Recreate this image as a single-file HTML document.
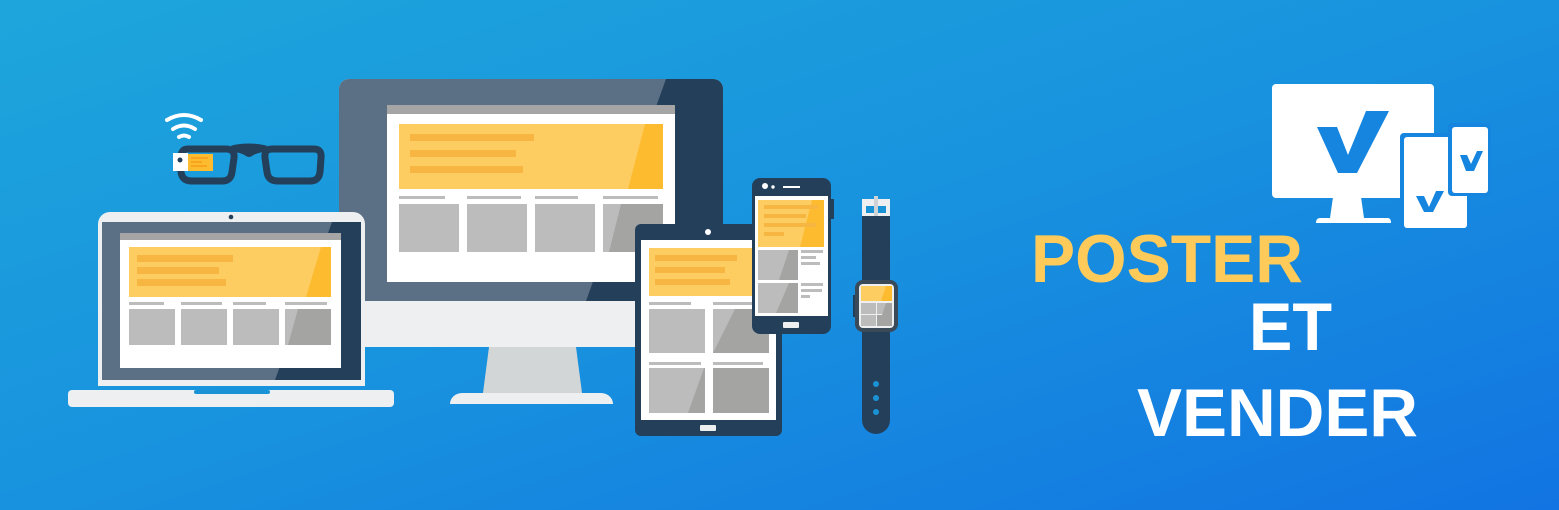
<!DOCTYPE html>
<html><head><meta charset="utf-8"><style>
html,body{margin:0;padding:0;width:1559px;height:510px;overflow:hidden}
svg{display:block}
</style></head><body>
<svg width="1559" height="510" viewBox="0 0 1559 510" xmlns="http://www.w3.org/2000/svg">
<defs>
<linearGradient id="bg" x1="0" y1="0" x2="1" y2="1" gradientUnits="objectBoundingBox">
<stop offset="0" stop-color="#1ea6dc"/><stop offset="0.5" stop-color="#1892de"/><stop offset="1" stop-color="#1274e2"/>
</linearGradient>
</defs>
<rect width="1559" height="510" fill="url(#bg)"/>

<!-- MONITOR -->
<rect x="339" y="79" width="384" height="268" rx="10" fill="#eeeff1"/>
<path d="M349 79 H713 a10 10 0 0 1 10 10 V301 H339 V89 a10 10 0 0 1 10 -10 Z" fill="#5b7085"/>
<path d="M666 79 H713 a10 10 0 0 1 10 10 V301 H586 Z" fill="#243f5a"/>
<rect x="387" y="105" width="288" height="177" fill="#fff"/>
<rect x="387" y="105" width="288" height="9" fill="#a5a5a5"/>
<rect x="399" y="124" width="264" height="65" fill="#fdcd62"/>
<path d="M645 124 H663 V189 H628 Z" fill="#fdbb2f"/>
<rect x="410" y="134" width="124" height="7" fill="#f7b541"/>
<rect x="410" y="150" width="106" height="7" fill="#f7b541"/>
<rect x="410" y="166" width="113" height="7" fill="#f7b541"/>
<g fill="#bcbcbc">
<rect x="399" y="196" width="46" height="3"/><rect x="467" y="196" width="54" height="3"/><rect x="535" y="196" width="43" height="3"/><rect x="603" y="196" width="55" height="3"/>
<rect x="399" y="204" width="60" height="48"/><rect x="467" y="204" width="60" height="48"/><rect x="535" y="204" width="60" height="48"/><rect x="603" y="204" width="60" height="48"/>
</g>
<path d="M621 204 H663 V252 H609 Z" fill="#a4a4a2"/>
<path d="M489 347 H576 L582 393 H483 Z" fill="#d3d6d7"/>
<path d="M462 393 H601 a12 11 0 0 1 12 11 H450 a12 11 0 0 1 12 -11 Z" fill="#eeeff1"/>

<!-- LAPTOP -->
<path d="M110 212 H353 a12 12 0 0 1 12 12 V386 H98 V224 a12 12 0 0 1 12 -12 Z" fill="#eeeff1"/>
<circle cx="231" cy="217" r="2.3" fill="#243f5a"/>
<rect x="102" y="222" width="259" height="158" fill="#5b7085"/>
<path d="M332 222 H361 V380 H275 Z" fill="#243f5a"/>
<rect x="120" y="233" width="221" height="135" fill="#fff"/>
<rect x="120" y="233" width="221" height="7" fill="#a5a5a5"/>
<rect x="129" y="247" width="202" height="50" fill="#fdcd62"/>
<path d="M321 247 H331 V297 H306 Z" fill="#fdbb2f"/>
<rect x="137" y="255" width="96" height="7" fill="#f7b541"/>
<rect x="137" y="267" width="82" height="7" fill="#f7b541"/>
<rect x="137" y="279" width="89" height="7" fill="#f7b541"/>
<g fill="#bcbcbc">
<rect x="129" y="302" width="35" height="3"/><rect x="181" y="302" width="41" height="3"/><rect x="233" y="302" width="33" height="3"/><rect x="285" y="302" width="42" height="3"/>
<rect x="129" y="309" width="46" height="36"/><rect x="181" y="309" width="46" height="36"/><rect x="233" y="309" width="46" height="36"/><rect x="285" y="309" width="46" height="36"/>
</g>
<path d="M298 309 H331 V345 H288 Z" fill="#a4a4a2"/>
<rect x="68" y="390" width="326" height="17" rx="4" fill="#eeeff1"/>
<rect x="194" y="390" width="76" height="4" rx="2" fill="#1a93d6"/>

<!-- GLASSES -->
<g fill="none" stroke="#fff" stroke-width="4" stroke-linecap="round">
<path d="M167 120 Q184 110 201 120"/>
<path d="M173 129 Q184 122 195 129"/>
<path d="M179 137 Q184 134 189 137"/>
</g>
<g fill="none" stroke="#243f5a" stroke-width="7" stroke-linejoin="round">
<path d="M188 149 H226 Q235 149 234 158 L232 172 Q231 181 222 181 H192 Q182 181 181 172 L181 157 Q181 149 188 149 Z"/>
<path d="M272 149 H314 Q322 149 321 158 L320 172 Q319 181 310 181 H278 Q268 181 267 172 L265 158 Q264 149 272 149 Z"/>
<path d="M232 149 Q249 145 266 149"/>
</g>
<path d="M232 146 H266 V152 Q258 152 252 156 Q249 158 246 156 Q240 152 232 152 Z" fill="#243f5a"/>
<rect x="173" y="153" width="15" height="18" fill="#fff"/>
<circle cx="180" cy="160" r="2.5" fill="#243f5a"/>
<rect x="188" y="154" width="25" height="17" fill="#fdbb2f"/>
<rect x="191" y="157" width="17" height="2" fill="#f7a520"/><rect x="191" y="161" width="11" height="2" fill="#f7a520"/><rect x="191" y="165" width="16" height="2" fill="#f7a520"/>

<!-- TABLET -->
<rect x="635" y="224" width="147" height="212" rx="6" fill="#243f5a"/>
<circle cx="708" cy="232" r="3" fill="#fff"/>
<rect x="641" y="240" width="135" height="180" fill="#fff"/>
<rect x="649" y="248" width="125" height="48" fill="#fdcd62"/>
<rect x="655" y="255" width="82" height="6" fill="#f7b541"/>
<rect x="655" y="267" width="70" height="6" fill="#f7b541"/>
<rect x="655" y="279" width="75" height="6" fill="#f7b541"/>
<g fill="#bcbcbc">
<rect x="649" y="302" width="42" height="3"/><rect x="713" y="302" width="50" height="3"/>
<rect x="649" y="309" width="56" height="44"/><rect x="713" y="309" width="56" height="44"/>
<rect x="649" y="362" width="52" height="3"/><rect x="713" y="362" width="50" height="3"/>
<rect x="649" y="368" width="56" height="45"/><rect x="713" y="368" width="56" height="45"/>
</g>
<path d="M735 309 H769 V353 H713 Z" fill="#a4a4a2"/>
<path d="M704 368 H705 V413 H688 Z" fill="#a4a4a2"/>
<path d="M713 368 H769 V413 H713 Z" fill="#a4a4a2"/>
<rect x="700" y="425" width="16" height="6" rx="1" fill="#eeeff1"/>

<!-- PHONE -->
<rect x="752" y="178" width="79" height="156" rx="8" fill="#243f5a"/>
<rect x="831" y="199" width="3" height="20" fill="#243f5a"/>
<circle cx="765" cy="186" r="3" fill="#fff"/><circle cx="773" cy="187" r="1.7" fill="#fff"/>
<rect x="783" y="186" width="17" height="2" fill="#fff"/>
<rect x="755" y="196" width="73" height="120" fill="#fff"/>
<rect x="758" y="200" width="66" height="47" fill="#fdcd62"/>
<path d="M812 200 H824 V247 H800 Z" fill="#fdbb2f"/>
<rect x="764" y="205" width="54" height="4" fill="#f7b541"/>
<rect x="764" y="214" width="42" height="4" fill="#f7b541"/>
<rect x="764" y="223" width="52" height="4" fill="#f7b541"/>
<rect x="764" y="232" width="20" height="4" fill="#f7b541"/>
<rect x="758" y="250" width="40" height="30" fill="#bcbcbc"/>
<rect x="758" y="283" width="40" height="30" fill="#bcbcbc"/>
<path d="M789 250 H798 V280 H779 Z M789 283 H798 V313 H776 Z" fill="#a4a4a2"/>
<g fill="#bcbcbc">
<rect x="801" y="250" width="22" height="3"/><rect x="801" y="256" width="15" height="3"/><rect x="801" y="262" width="19" height="3"/>
<rect x="801" y="283" width="22" height="3"/><rect x="801" y="289" width="21" height="3"/><rect x="801" y="295" width="9" height="3"/>
</g>
<rect x="783" y="322" width="16" height="6" rx="1" fill="#eeeff1"/>

<!-- WATCH -->
<rect x="862" y="216" width="28" height="64" fill="#243f5a"/>
<path d="M862 331 H890 V420 a14 14 0 0 1 -28 0 Z" fill="#243f5a"/>
<rect x="862" y="199" width="28" height="17" fill="#eeeff1"/>
<rect x="866" y="206" width="20" height="7" fill="#1a93d6"/>
<rect x="874" y="196" width="4" height="20" fill="#cfd3d6"/>
<rect x="853" y="295" width="4" height="22" fill="#243f5a"/>
<rect x="855" y="280" width="43" height="52" rx="8" fill="#3a4a58"/>
<rect x="859" y="284" width="35" height="44" rx="4" fill="#eeeff1"/>
<rect x="861" y="286" width="31" height="15" fill="#fdcd62"/>
<path d="M886 286 H892 V301 H881 Z" fill="#fdbb2f"/>
<g fill="#bcbcbc"><rect x="861" y="303" width="15" height="11"/><rect x="877" y="303" width="15" height="11"/><rect x="861" y="315" width="15" height="11"/><rect x="877" y="315" width="15" height="11"/></g>
<path d="M886 303 H892 V326 H877 V315 H882 Z" fill="#a4a4a2"/>
<circle cx="876" cy="384" r="3" fill="#1a93d6"/><circle cx="876" cy="398" r="3" fill="#1a93d6"/><circle cx="876" cy="412" r="3" fill="#1a93d6"/>

<!-- LOGO -->
<rect x="1272" y="84" width="162" height="114" rx="4" fill="#fff"/>
<path d="M1333 197 H1361 L1364 218 H1388 Q1391 218 1391 223 H1316 Q1316 218 1320 218 H1330 Z" fill="#fff"/>
<path d="M1317 127 H1337 L1348 155 L1366 111 H1389 L1357 173 H1338 Z" fill="#1585df"/>
<rect x="1400" y="133" width="70" height="97" rx="4" fill="#1585df"/>
<rect x="1404" y="137" width="63" height="91" rx="3" fill="#fff"/>
<rect x="1448" y="123" width="43" height="73" rx="4" fill="#1585df"/>
<rect x="1452" y="127" width="36" height="66" rx="3" fill="#fff"/>
<path d="M1416 196 H1424 L1429 207 L1436 191 H1444 L1433 212 H1424 Z" fill="#1585df"/>
<path d="M1460 155 H1467 L1471 164 L1477 151 H1483 L1474 171 H1466 Z" fill="#1585df"/>

<!-- TEXT -->
<g font-family="Liberation Sans, Arial, sans-serif" font-weight="bold" font-size="68">
<text x="1031" y="282" fill="#fecb5a" textLength="272" lengthAdjust="spacingAndGlyphs">POSTER</text>
<text x="1249" y="350" fill="#fff" textLength="83" lengthAdjust="spacingAndGlyphs">ET</text>
<text x="1137" y="436" fill="#fff" textLength="281" lengthAdjust="spacingAndGlyphs">VENDER</text>
</g>
</svg>
</body></html>
